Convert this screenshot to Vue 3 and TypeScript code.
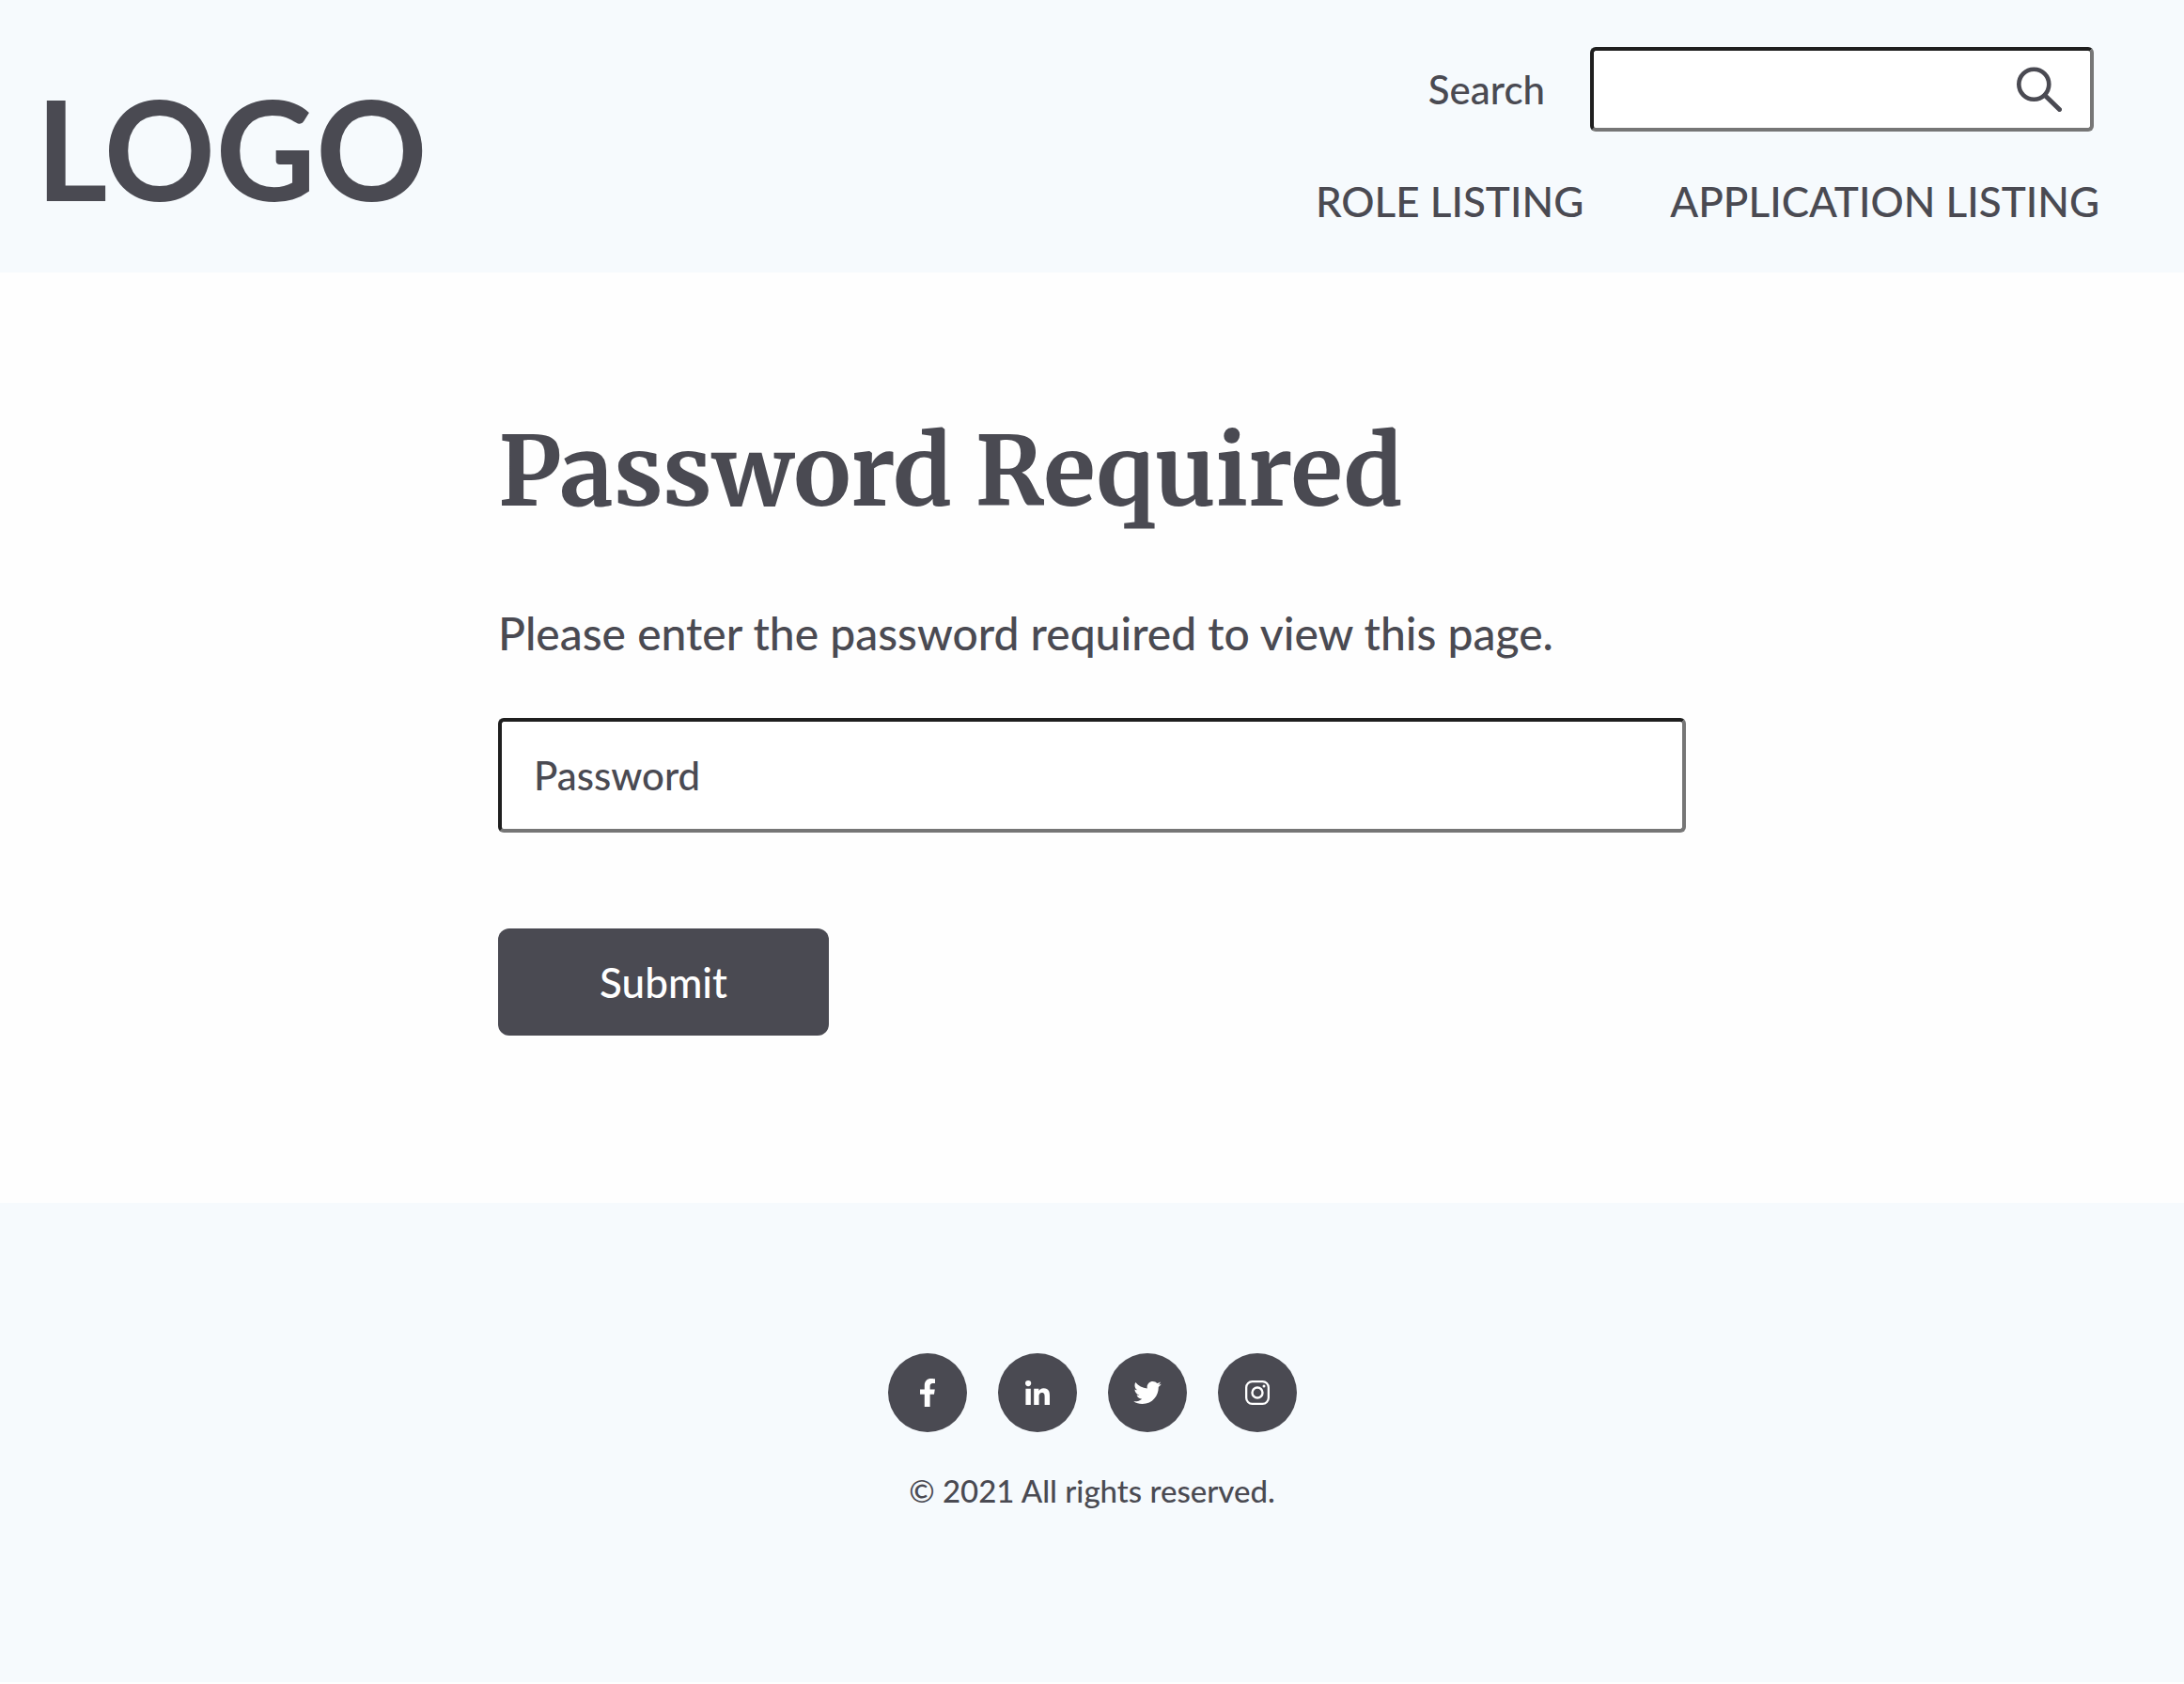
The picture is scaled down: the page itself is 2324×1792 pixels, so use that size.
<script setup lang="ts">
import { ref } from 'vue'

interface NavLink {
  label: string
  href: string
}

interface SocialLink {
  name: string
  viewBox: string
  width: number
  height: number
  path: string
}

const navLinks: NavLink[] = [
  { label: 'ROLE LISTING', href: '#roles' },
  { label: 'APPLICATION LISTING', href: '#applications' },
]

const socialLinks: SocialLink[] = [
  {
    name: 'Facebook',
    viewBox: '22 0 275 512',
    width: 16,
    height: 30,
    path: 'M279.14 288l14.22-92.66h-88.91v-60.13c0-25.35 12.42-50.06 52.24-50.06h40.42V6.26S260.43 0 225.36 0c-73.22 0-121.08 44.38-121.08 124.72v70.62H22.89V288h81.39v224h100.17V288z',
  },
  {
    name: 'LinkedIn',
    viewBox: '0 0 448 448',
    width: 26,
    height: 26,
    path: 'M100.28 448H7.4V148.9h92.88zM53.79 108.1C24.09 108.1 0 83.5 0 53.8a53.79 53.79 0 0 1 107.58 0c0 29.7-24.1 54.3-53.79 54.3zM447.9 448h-92.68V302.4c0-34.7-.7-79.2-48.29-79.2-48.29 0-55.69 37.7-55.69 76.7V448h-92.78V148.9h89.08v40.8h1.3c12.4-23.5 42.69-48.3 87.88-48.3 94 0 111.28 61.9 111.28 142.3V448z',
  },
  {
    name: 'Twitter',
    viewBox: '0 48 512 416',
    width: 30,
    height: 24,
    path: 'M459.37 151.716c.325 4.548.325 9.097.325 13.645 0 138.72-105.583 298.558-298.558 298.558-59.452 0-114.68-17.219-161.137-47.106 8.447.974 16.568 1.299 25.34 1.299 49.055 0 94.213-16.568 130.274-44.832-46.132-.975-84.792-31.188-98.112-72.772 6.498.974 12.995 1.624 19.818 1.624 9.421 0 18.843-1.3 27.614-3.573-48.081-9.747-84.143-51.98-84.143-102.985v-1.299c13.969 7.797 30.214 12.67 47.431 13.319-28.264-18.843-46.781-51.005-46.781-87.391 0-19.492 5.197-37.36 14.294-52.954 51.655 63.675 129.3 105.258 216.365 109.807-1.624-7.797-2.599-15.918-2.599-24.04 0-57.828 46.782-104.934 104.934-104.934 30.213 0 57.502 12.67 76.67 33.137 23.715-4.548 46.456-13.32 66.599-25.34-7.798 24.366-24.366 44.833-46.132 57.827 21.117-2.273 41.584-8.122 60.426-16.243-14.292 20.791-32.161 39.308-52.628 54.253z',
  },
  {
    name: 'Instagram',
    viewBox: '0 0 26 26',
    width: 26,
    height: 26,
    path: 'M7.5 0h11A7.5 7.5 0 0 1 26 7.5v11a7.5 7.5 0 0 1-7.5 7.5h-11A7.5 7.5 0 0 1 0 18.5v-11A7.5 7.5 0 0 1 7.5 0zM7.5 2.3A5.2 5.2 0 0 0 2.3 7.5v11a5.2 5.2 0 0 0 5.2 5.2h11a5.2 5.2 0 0 0 5.2-5.2v-11a5.2 5.2 0 0 0-5.2-5.2zM13 6.3a6.7 6.7 0 1 1 0 13.4a6.7 6.7 0 1 1 0-13.4zM13 8.7a4.3 4.3 0 1 0 0 8.6a4.3 4.3 0 1 0 0-8.6zM20 4.5a1.5 1.5 0 1 1 0 3a1.5 1.5 0 1 1 0-3z',
  },
]

const query = ref('')
const password = ref('')
</script>

<template>
  <div class="page">
    <header class="header">
      <a class="logo" href="#home">LOGO</a>
      <div class="tools">
        <form class="search" role="search" @submit.prevent>
          <label class="search-label" for="site-search">Search</label>
          <div class="field search-field">
            <input id="site-search" v-model="query" class="search-input" type="text" />
            <button class="search-button" type="submit" aria-label="Submit search">
              <svg width="48" height="48" viewBox="0 0 48 48" fill="none" stroke="currentColor" aria-hidden="true">
                <circle cx="18.3" cy="18.8" r="16" stroke-width="4.6" />
                <path d="M30 30.5L45.5 45.5" stroke-width="5" stroke-linecap="round" />
              </svg>
            </button>
          </div>
        </form>
        <nav class="nav">
          <a v-for="link in navLinks" :key="link.label" class="nav-link" :href="link.href">{{ link.label }}</a>
        </nav>
      </div>
    </header>

    <main class="main">
      <form class="gate" @submit.prevent>
        <h1 class="title">Password Required</h1>
        <p class="intro">Please enter the password required to view this page.</p>
        <input
          v-model="password"
          class="field password"
          type="password"
          placeholder="Password"
          aria-label="Password"
        />
        <button class="submit" type="submit">Submit</button>
      </form>
    </main>

    <footer class="footer">
      <div class="socials">
        <a v-for="item in socialLinks" :key="item.name" class="social" href="#social" :aria-label="item.name">
          <svg
            :width="item.width"
            :height="item.height"
            :viewBox="item.viewBox"
            fill="currentColor"
            fill-rule="evenodd"
            aria-hidden="true"
          >
            <path :d="item.path" />
          </svg>
        </a>
      </div>
      <p class="copyright">© 2021 All rights reserved.</p>
    </footer>
  </div>
</template>

<style>
body {
  margin: 0;
  background: #fefefe;
}
</style>

<style scoped>
.page {
  color: #4a4a52;
  font-family: Lato, 'Liberation Sans', sans-serif;
  font-weight: 500;
}

.page * {
  box-sizing: border-box;
}

a {
  color: inherit;
  text-decoration: none;
}

.header {
  display: flex;
  align-items: flex-start;
  justify-content: space-between;
  padding: 50px 90px 40px 38px;
  background: #f6fafd;
}

.logo {
  margin-top: 14px;
  font-size: 147px;
  font-weight: 700;
  line-height: 186px;
}

.tools {
  display: flex;
  flex-direction: column;
  align-items: flex-end;
  gap: 48px;
}

.search {
  display: flex;
  align-items: center;
  gap: 48px;
  margin-right: 6px;
}

.search-label {
  font-size: 42px;
  line-height: 52px;
}

.field {
  border: 4px solid;
  border-color: #1f1f1f #767676 #767676 #1f1f1f;
  border-radius: 6px;
  background: #fff;
}

.search-field {
  display: flex;
  align-items: center;
  width: 536px;
  height: 90px;
  padding: 0 30px;
}

.search-input {
  flex: 1;
  min-width: 0;
  height: 100%;
  padding: 0;
  border: 0;
  outline: 0;
  background: transparent;
  color: inherit;
  font: inherit;
  font-size: 42px;
}

.search-button {
  display: flex;
  padding: 0;
  border: 0;
  background: transparent;
  color: inherit;
}

.nav {
  display: flex;
  gap: 92px;
}

.nav-link {
  font-size: 44px;
  line-height: 52px;
}

.main {
  padding: 152px 0 178px;
}

.gate {
  display: flex;
  flex-direction: column;
  align-items: flex-start;
  max-width: 1264px;
  margin: 0 auto;
}

.title {
  margin: 0;
  font-family: Merriweather, 'DejaVu Serif Condensed', 'DejaVu Serif', serif;
  font-size: 102px;
  font-weight: 700;
  line-height: 120px;
}

.intro {
  margin: 80px 0 58px;
  font-size: 48px;
  line-height: 64px;
}

.password {
  width: 100%;
  height: 122px;
  margin-bottom: 102px;
  padding: 0 34px;
  color: inherit;
  font: inherit;
  font-size: 42px;
}

.password::placeholder {
  color: #4a4a52;
  opacity: 1;
}

.submit {
  width: 352px;
  height: 114px;
  border: 0;
  border-radius: 12px;
  background: #4a4a52;
  color: #fff;
  font: inherit;
  font-size: 44px;
}

.footer {
  display: flex;
  flex-direction: column;
  align-items: center;
  padding: 160px 0 182px;
  background: #f6fafd;
}

.socials {
  display: flex;
  gap: 33px;
}

.social {
  display: flex;
  align-items: center;
  justify-content: center;
  width: 84px;
  height: 84px;
  border-radius: 50%;
  background: #4a4a52;
  color: #fff;
}

.copyright {
  margin: 40px 0 0;
  font-size: 33px;
  line-height: 44px;
}
</style>
